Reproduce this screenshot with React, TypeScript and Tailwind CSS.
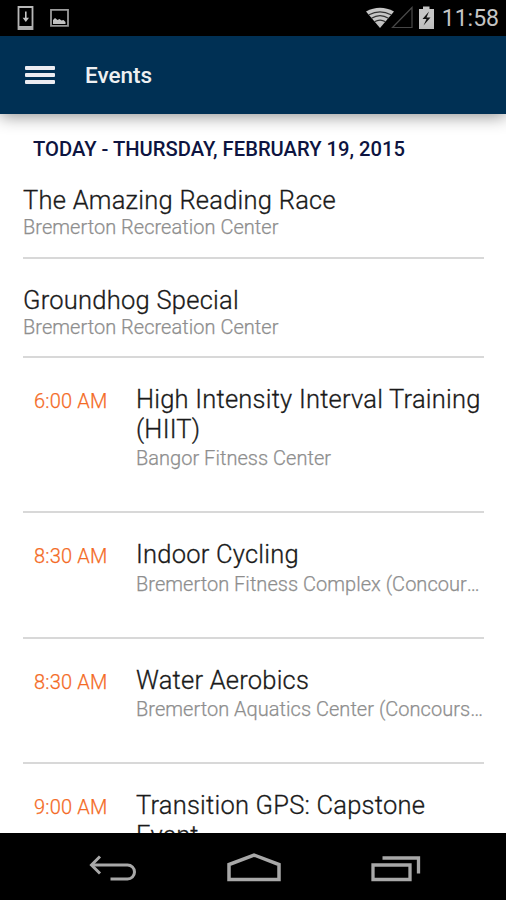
interface EventItem {
  title: string;
  place: string;
  time?: string;
}

const allDayEvents: EventItem[] = [
  { title: 'The Amazing Reading Race', place: 'Bremerton Recreation Center' },
  { title: 'Groundhog Special', place: 'Bremerton Recreation Center' },
];

const timedEvents: EventItem[] = [
  { time: '6:00 AM', title: 'High Intensity Interval Training (HIIT)', place: 'Bangor Fitness Center' },
  { time: '8:30 AM', title: 'Indoor Cycling', place: 'Bremerton Fitness Complex (Concourse)' },
  { time: '8:30 AM', title: 'Water Aerobics', place: 'Bremerton Aquatics Center (Concourse)' },
  { time: '9:00 AM', title: 'Transition GPS: Capstone Event', place: 'Fleet and Family Support Center' },
];

function StatusBar() {
  return (
    <div className="flex h-9 shrink-0 items-center justify-between bg-black pl-4 pr-[7px]">
      <div className="flex items-center gap-[14px]">
        <svg width="20" height="26" viewBox="0 0 20 26" fill="none">
          <path d="M2.500 2h14v22h-14z" stroke="#b8b8b8" strokeWidth="1.800" />
          <path d="M2 21h15v4H2z" fill="#b8b8b8" />
          <path d="M9.800 6.500v8" stroke="#c4c4c4" strokeWidth="1.600" />
          <path d="M6.600 12.800h6.400L9.800 17z" fill="#c4c4c4" />
        </svg>
        <svg width="20" height="20" viewBox="0 0 20 20" fill="none">
          <path d="M1 1.800h17v16H1z" stroke="#9c9c9c" strokeWidth="1.800" />
          <path d="M3 16v-4l2-2 2.500 2 2-1 2 1.500 2-.5 2 2V16z" fill="#c4c4c4" />
        </svg>
      </div>
      <div className="flex items-center">
        <svg width="72" height="26" viewBox="0 0 72 26" fill="none" className="mr-1">
          <path d="M0 6.500Q14 -1 28 6.500L14 23z" fill="#c6c6c6" />
          <path d="M3 9.800Q14 3.800 25 9.800M5.500 13.200Q14 8 22.500 13.200M8.500 16.800Q14 13.500 19.500 16.800" stroke="#333" strokeWidth="1.200" />
          <path d="M26.500 22.500H46V2.500z" stroke="#4a4a4a" strokeWidth="1.200" />
          <path d="M53 4h4V1.500h6.500V4H68v20H53z" fill="#c6c6c6" />
          <path d="M63 6.500l-6.500 7.500h4l-3 6.500 7-8h-4z" fill="#111" />
        </svg>
        <span className="pt-px text-[23px] leading-9 text-[#c6c6c6]">11:58</span>
      </div>
    </div>
  );
}

function AppBar() {
  return (
    <header className="z-10 flex h-[78px] shrink-0 items-center bg-[#003054] pl-[25px] shadow-[0_2px_16px_rgba(0,0,0,0.45)]">
      <button aria-label="Menu" className="flex w-[30px] flex-col gap-[3px]">
        <span className="h-1 rounded-[1px] bg-[#ececf2]" />
        <span className="h-1 rounded-[1px] bg-[#ececf2]" />
        <span className="h-1 rounded-[1px] bg-[#ececf2]" />
      </button>
      <h1 className="ml-[30px] pt-[2px] text-[22.500px] font-medium text-[#eef0f2]">Events</h1>
    </header>
  );
}

function AllDayRow({ event }: { event: EventItem }) {
  return (
    <li className="h-[99.500px] border-b-2 border-[#d8d8d8] pt-[26px]">
      <h3 className="text-[25.500px] font-light leading-[30px] tracking-[0.25px] text-[#1a1a1a] [-webkit-text-stroke:0.3px]">
        {event.title}
      </h3>
      <p className="text-[20px] font-light leading-[25px] tracking-[0.03px] text-[#8e8e8e] [-webkit-text-stroke:0.25px]">
        {event.place}
      </p>
    </li>
  );
}

function TimedRow({ event }: { event: EventItem }) {
  return (
    <li className="flex min-h-[125.500px] border-b-2 border-[#d8d8d8] pb-[39px] pt-[27px]">
      <span className="w-[113px] shrink-0 pl-[11px] text-[20px] font-light leading-[32px] tracking-[0.2px] text-[#f46a25] [-webkit-text-stroke:0.25px]">
        {event.time}
      </span>
      <div className="min-w-0 flex-1">
        <h3 className="text-[25.500px] font-light leading-[29.500px] tracking-[0.22px] text-[#1a1a1a] [-webkit-text-stroke:0.3px]">
          {event.title}
        </h3>
        <p className="truncate text-[20px] font-light leading-[28px] tracking-[0.03px] text-[#8e8e8e] [-webkit-text-stroke:0.25px]">
          {event.place}
        </p>
      </div>
    </li>
  );
}

function NavBar() {
  return (
    <nav className="flex h-[67px] shrink-0 items-center justify-between bg-black pl-[88px] pr-[84px]">
      <svg width="50" height="32" viewBox="0 0 50 32" fill="none" stroke="#a8a8a8" strokeWidth="3">
        <path d="M4 14H39.500a7 7 0 0 1 0 14H22.500" />
        <path d="M12 5.500L3.500 14 12 22.500" />
      </svg>
      <svg width="54" height="32" viewBox="0 0 54 32" fill="none" stroke="#a8a8a8" strokeWidth="3.500">
        <path d="M2 28.500V13.500L27 4l25 9.500v15z" />
      </svg>
      <svg width="52" height="32" viewBox="0 0 52 32" fill="none" stroke="#a8a8a8" strokeWidth="3.300">
        <path d="M3 14h37v14.500H3z" />
        <path d="M12.500 7h36v15.500" />
      </svg>
    </nav>
  );
}

export default function App() {
  return (
    <div className="flex h-[900px] w-[506px] flex-col overflow-hidden bg-white font-[Roboto,sans-serif]">
      <StatusBar />
      <AppBar />
      <main className="min-h-0 flex-1 overflow-hidden pl-[23px] pr-[22px]">
        <h2 className="h-[45px] pl-[10px] pt-[20px] text-[20.200px] leading-[30px] font-medium text-[#0d1440]">
          TODAY - THURSDAY, FEBRUARY 19, 2015
        </h2>
        <ul>
          {allDayEvents.map((event) => (
            <AllDayRow key={event.title} event={event} />
          ))}
          {timedEvents.map((event) => (
            <TimedRow key={event.title} event={event} />
          ))}
        </ul>
      </main>
      <NavBar />
    </div>
  );
}
